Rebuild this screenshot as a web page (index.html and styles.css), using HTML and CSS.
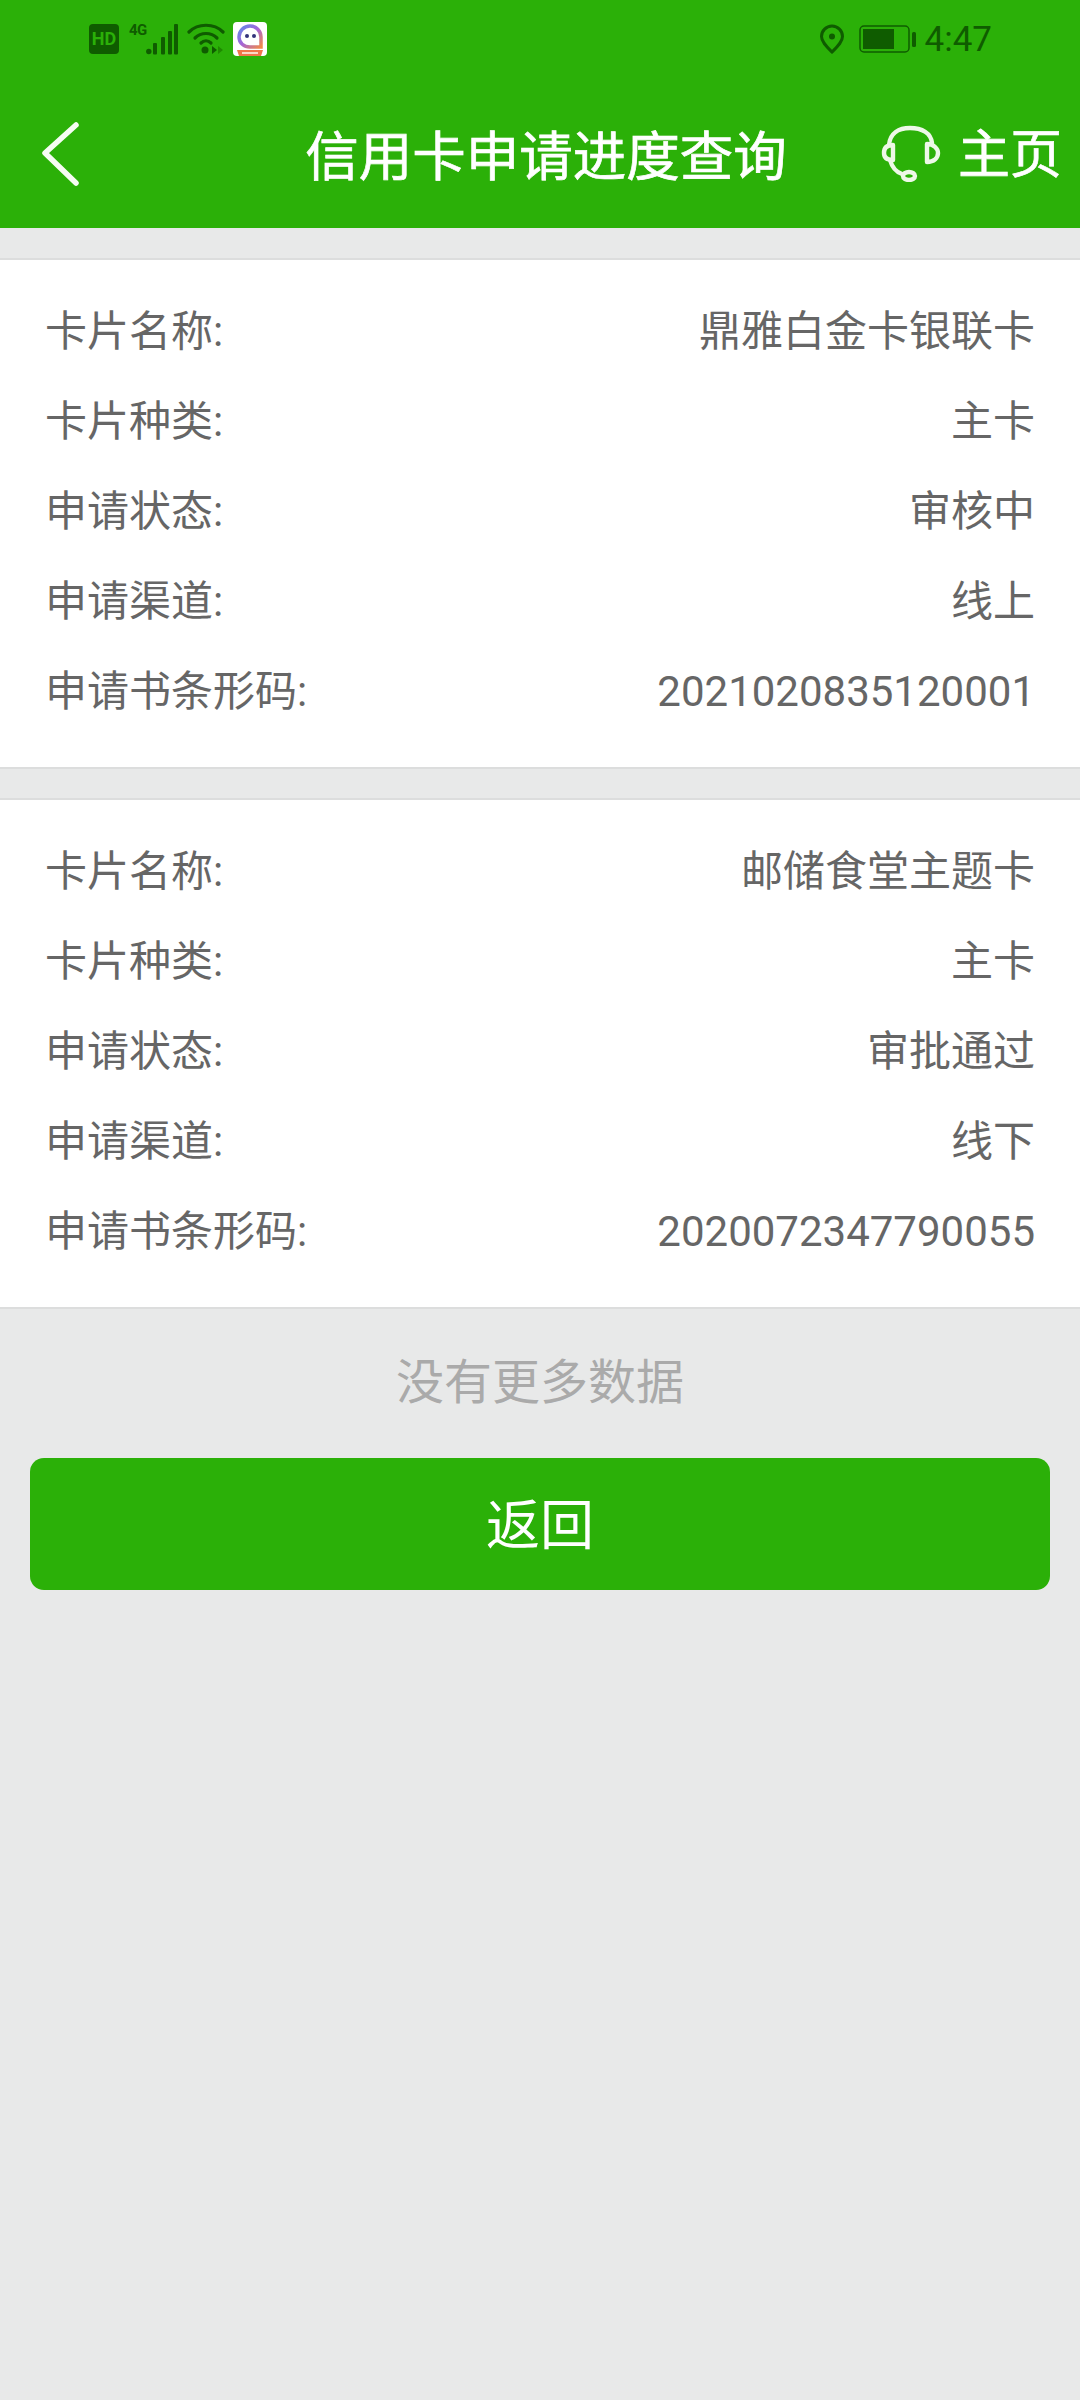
FILE: index.html
```html
<!DOCTYPE html>
<html lang="zh">
<head>
<meta charset="utf-8">
<title>信用卡申请进度查询</title>
<link rel="stylesheet" href="styles.css">
</head>
<body>
<header class="top">
  <div class="status">
    <div class="status-left">
      <span class="hd">HD</span>
      <span class="net">4G</span>
      <svg class="ic-signal" width="32" height="31" viewBox="0 0 32 31"><g fill="#0f5c00"><circle cx="2.800" cy="27.500" r="2.700"/><rect x="7" y="19" width="4" height="11.500" rx="1"/><rect x="15" y="13" width="4" height="17.500" rx="1"/><rect x="22" y="7" width="4" height="23.500" rx="1"/><rect x="28" y="0" width="4" height="30.500" rx="1"/></g></svg>
      <svg class="ic-wifi" width="38" height="32" viewBox="0 0 38 32"><g fill="none" stroke="#0f5c00" stroke-width="3.200" stroke-linecap="round"><path d="M2 9C11 0 27 0 36 9"/><path d="M8 15C14 9 24 9 30 15"/><path d="M14 20C17 17 21 17 24 20"/></g><circle cx="18" cy="27" r="3.500" fill="#0f5c00"/><path d="M25 23L30 27L25 31Z" fill="#0f5c00"/><path d="M31 23L36 27L31 31Z" fill="#1f8a00"/></svg>
      <svg class="ic-app" width="34" height="34" viewBox="0 0 34 34"><defs><linearGradient id="ring" x1="0" y1="0" x2="1" y2="1"><stop offset="0" stop-color="#5f8be8"/><stop offset="0.500" stop-color="#a564d8"/><stop offset="1" stop-color="#f08a4a"/></linearGradient></defs><rect width="34" height="34" rx="4" fill="#fff"/><path d="M17 4A11 11 0 0 0 6 15C6 21 11 25 17 25H28V15A11 11 0 0 0 17 4Z" fill="none" stroke="url(#ring)" stroke-width="3.500"/><circle cx="14" cy="14" r="2" fill="#33337a"/><circle cx="21" cy="14" r="2" fill="#33337a"/><path d="M4 28H30L28 34H6Z" fill="#f0764a"/><rect x="9" y="30" width="16" height="2" fill="#fbd9c6"/></svg>
    </div>
    <div class="status-right">
      <svg class="ic-loc" width="26" height="30" viewBox="0 0 26 30"><path d="M13 28C8 23 2.500 18 2.500 12.500A10.500 10.500 0 0 1 23.500 12.500C23.500 18 18 23 13 28Z" fill="none" stroke="#0f5c00" stroke-width="3"/><circle cx="13" cy="12.500" r="3" fill="#0f5c00"/></svg>
      <svg class="ic-bat" width="58" height="28" viewBox="0 0 58 28"><rect x="1" y="1" width="49" height="26" rx="4" fill="none" stroke="#0f5c00" stroke-width="1.500"/><rect x="4" y="4" width="31" height="20" fill="#0f5c00"/><rect x="53" y="7" width="4" height="15" rx="1.500" fill="#0f5c00"/></svg>
      <span class="time">4:47</span>
    </div>
  </div>
  <div class="nav">
    <svg class="ic-back" width="40" height="66" viewBox="0 0 40 66"><path d="M35 4L4 32L35 62" fill="none" stroke="#f6fcf3" stroke-width="5.500" stroke-linecap="round" stroke-linejoin="round"/></svg>
    <h1 class="title">信用卡申请进度查询</h1>
    <div class="home">
      <svg class="ic-head" width="60" height="57" viewBox="0 0 60 57"><g fill="none" stroke="#eef8e8" stroke-width="4.400" stroke-linecap="round" stroke-linejoin="round"><path d="M8 20C9 8 18 3 29 3C41 3 50 8 51 18"/><path d="M12 20C5 20 3 24 3 28C3 32 5 35 12 35Z"/><path d="M46 19C53 19 57 24 57 28C57 33 53 37 46 37Z"/><path d="M9 35C11 42 15 47 21 49"/><ellipse cx="28" cy="51" rx="6" ry="4"/></g></svg>
      <span class="home-text">主页</span>
    </div>
  </div>
</header>
<main class="content">
  <section class="card">
    <div class="row"><span>卡片名称:</span><span>鼎雅白金卡银联卡</span></div>
    <div class="row"><span>卡片种类:</span><span>主卡</span></div>
    <div class="row"><span>申请状态:</span><span>审核中</span></div>
    <div class="row"><span>申请渠道:</span><span>线上</span></div>
    <div class="row"><span>申请书条形码:</span><span>2021020835120001</span></div>
  </section>
  <section class="card">
    <div class="row"><span>卡片名称:</span><span>邮储食堂主题卡</span></div>
    <div class="row"><span>卡片种类:</span><span>主卡</span></div>
    <div class="row"><span>申请状态:</span><span>审批通过</span></div>
    <div class="row"><span>申请渠道:</span><span>线下</span></div>
    <div class="row"><span>申请书条形码:</span><span>2020072347790055</span></div>
  </section>
  <p class="nomore">没有更多数据</p>
  <button class="back-btn" type="button">返回</button>
</main>
</body>
</html>
```

FILE: styles.css
```css
* { box-sizing: border-box; }
html, body { margin: 0; padding: 0; }
body {
  width: 1080px;
  height: 2400px;
  overflow: hidden;
  background: #e8e9e9;
  font-family: Roboto, "Noto Sans CJK SC", sans-serif;
}
.top { height: 228px; background: #2bb008; display: flex; flex-direction: column; }
.status {
  height: 78px;
  display: flex;
  justify-content: space-between;
  align-items: center;
  padding: 0 88px 0 89px;
}
.status-left, .status-right { display: flex; align-items: center; }
.hd {
  width: 30px;
  height: 30px;
  border-radius: 4px;
  background: #0f5c00;
  color: #2bb008;
  font-size: 18px;
  font-weight: 700;
  line-height: 30px;
  text-align: center;
}
.net {
  width: 17px;
  margin-left: 10px;
  align-self: flex-start;
  margin-top: 1px;
  font-size: 15px;
  font-weight: 700;
  line-height: 1;
  letter-spacing: -0.500px;
  color: #0f5c00;
}
.ic-wifi { margin-left: 9px; }
.ic-app { margin-left: 8px; }
.ic-bat { margin-left: 14px; }
.time { margin-left: 8px; font-size: 35px; color: #0f5c00; line-height: 1; }
.nav {
  flex: 1;
  position: relative;
  display: flex;
  align-items: center;
  justify-content: center;
  padding: 10px 0 0 12px;
}
.ic-back { position: absolute; left: 41px; top: 43px; }
.title {
  margin: 0;
  font-size: 53.500px;
  font-weight: 400;
  color: #fff;
  line-height: 1;
  -webkit-text-stroke: 0.700px #fff;
}
.home { position: absolute; left: 881px; top: 47px; display: flex; align-items: center; gap: 17px; }
.home-text {
  font-size: 52px;
  color: #fff;
  line-height: 1;
  padding-top: 5px;
  -webkit-text-stroke: 0.700px #fff;
}
.content { padding-top: 30px; }
.card {
  background: #fff;
  border-top: 2px solid #dcdddd;
  border-bottom: 2px solid #dcdddd;
  padding: 22px 45px 35px 45px;
  margin-bottom: 29px;
}
.row {
  height: 90px;
  padding-top: 15px;
  display: flex;
  justify-content: space-between;
  align-items: baseline;
  font-size: 42px;
  color: #666666;
}
.nomore {
  margin: -29px 0 0;
  height: 149px;
  padding-bottom: 12px;
  display: flex;
  align-items: center;
  justify-content: center;
  font-size: 48px;
  color: #aaaaaa;
}
.back-btn {
  display: block;
  width: 1020px;
  height: 132px;
  margin: 0 30px;
  border: 0;
  border-radius: 14px;
  background: #2bb008;
  color: #fff;
  font-family: inherit;
  font-size: 54px;
  padding: 0 0 5px;
}
```
